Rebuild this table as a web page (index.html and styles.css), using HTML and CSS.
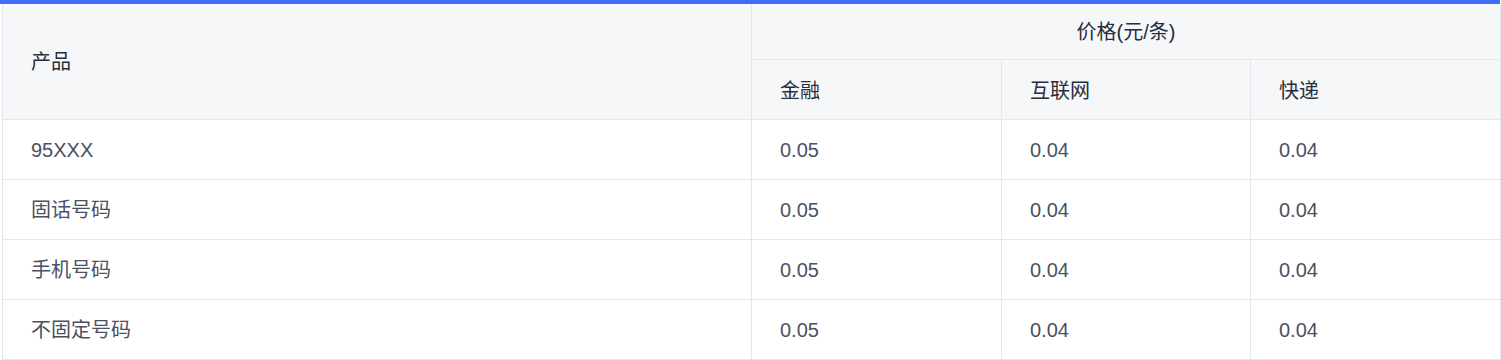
FILE: index.html
```html
<!DOCTYPE html>
<html lang="zh-CN">
<head>
<meta charset="utf-8">
<title>价格表</title>
<link rel="stylesheet" href="styles.css">
</head>
<body>
<div class="price-card">
  <table class="price-table">
    <colgroup>
      <col class="col-product">
      <col class="col-price-a">
      <col class="col-price-b">
      <col class="col-price-c">
    </colgroup>
    <thead>
      <tr class="head-row-1">
        <th class="th-product" rowspan="2">产品</th>
        <th class="th-group" colspan="3">价格(元/条)</th>
      </tr>
      <tr class="head-row-2">
        <th>金融</th>
        <th>互联网</th>
        <th>快递</th>
      </tr>
    </thead>
    <tbody>
      <tr><td>95XXX</td><td>0.05</td><td>0.04</td><td>0.04</td></tr>
      <tr><td>固话号码</td><td>0.05</td><td>0.04</td><td>0.04</td></tr>
      <tr><td>手机号码</td><td>0.05</td><td>0.04</td><td>0.04</td></tr>
      <tr><td>不固定号码</td><td>0.05</td><td>0.04</td><td>0.04</td></tr>
    </tbody>
  </table>
</div>
</body>
</html>
```

FILE: styles.css
```css
html, body {
  margin: 0;
  padding: 0;
  background: #ffffff;
}

body {
  font-family: "Liberation Sans", "Noto Sans CJK SC", sans-serif;
  font-size: 20px;
}

.price-card {
  width: 1500px;
  border-top: 4px solid #3d6ef6;
  box-sizing: border-box;
}

.price-table {
  width: 1498px;
  margin-left: 2px;
  border-collapse: separate;
  border-spacing: 0;
  table-layout: fixed;
  border-left: 1px solid #e3e6ee;
}

.col-product { width: 749px; }
.col-price-a { width: 250px; }
.col-price-b { width: 249px; }
.col-price-c { width: 250px; }

.price-table th,
.price-table td {
  border-right: 1px solid #e3e6ee;
  border-bottom: 1px solid #e3e6ee;
  padding: 0 0 0 28px;
  text-align: left;
  vertical-align: middle;
  line-height: 24px;
  box-sizing: border-box;
}

.price-table th {
  background: #f6f7f9;
  color: #262d3d;
  font-weight: 400;
}

.head-row-1 th { height: 56px; }
.head-row-2 th {
  height: 60px;
  padding-top: 2px;
}

.price-table th.th-group {
  text-align: center;
  padding: 0;
}

.price-table td {
  color: #4a5163;
  height: 60px;
  padding-top: 1px;
}
```
